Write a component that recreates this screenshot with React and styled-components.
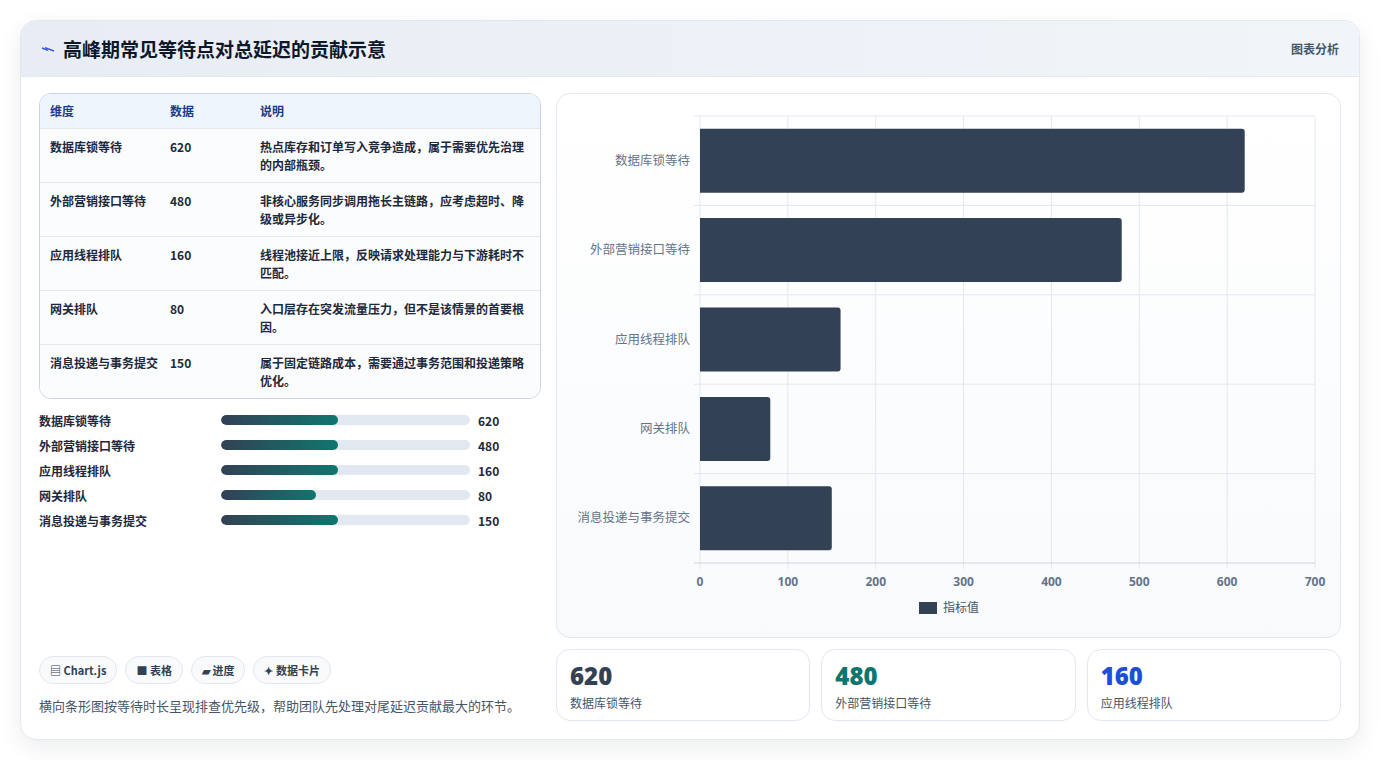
import styled, { createGlobalStyle } from 'styled-components';

const Global = createGlobalStyle`
  body { margin: 0; background: #fff; font-family: "Noto Sans CJK SC", "Noto Sans", sans-serif; color: #1e293b; }
`;

const Page = styled.div`
  padding: 20px 21px 20px 20px;
`;

const Card = styled.div`
  height: 720px;
  box-sizing: border-box;
  border: 1px solid #e2e8f0;
  border-radius: 16px;
  box-shadow: 0 8px 24px rgba(15, 23, 42, 0.08);
  overflow: hidden;
  display: flex;
  flex-direction: column;
  background: #fff;
`;

const Header = styled.div`
  height: 55px;
  flex: none;
  display: flex;
  align-items: center;
  justify-content: space-between;
  padding: 0 20px;
  background: linear-gradient(90deg, #e8edf5, #f1f5f9);
  border-bottom: 1px solid #e2e8f0;
`;

const Title = styled.h1`
  margin: 0;
  font-size: 19px;
  font-weight: 700;
  color: #0f172a;
  display: flex;
  align-items: center;
  gap: 8px;
`;

const Tag = styled.span`
  font-size: 12px;
  font-weight: 600;
  color: #475569;
`;

const Body = styled.div`
  flex: 1;
  display: grid;
  grid-template-columns: 502px 785px;
  gap: 15px;
  padding: 16px 18px 18px 18px;
`;

const Left = styled.div`
  display: flex;
  flex-direction: column;
`;

const Table = styled.div`
  border: 1px solid #cbd5e1;
  border-radius: 12px;
  overflow: hidden;
  font-size: 12px;
  font-weight: 600;
`;

const Row = styled.div`
  display: grid;
  grid-template-columns: 120px 90px 1fr;
  padding: ${p => (p.$head ? '8px 10px' : '9px 16px 8px 10px')};
  min-height: ${p => (p.$head ? '16px' : '36px')};
  line-height: 18px;
  background: ${p => (p.$head ? '#eef5fd' : '#fbfcfe')};
  color: ${p => (p.$head ? '#1e3a8a' : '#1e293b')};
  border-top: ${p => (p.$head ? 'none' : '1px solid #e2e8f0')};
`;

const Bars = styled.div`
  display: flex;
  flex-direction: column;
  gap: 7px;
  margin-top: 12px;
`;

const BarRow = styled.div`
  display: grid;
  grid-template-columns: 182px 249px 1fr;
  align-items: center;
  gap: 0;
  font-size: 12px;
  font-weight: 600;
  height: 18px;
`;

const Track = styled.div`
  height: 10px;
  border-radius: 5px;
  background: #e2e8f0;
  overflow: hidden;
`;

const Fill = styled.div`
  height: 100%;
  border-radius: 5px;
  background: linear-gradient(90deg, #334155, #0f766e);
`;

const Value = styled.span`
  padding-left: 8px;
  font-weight: 700;
`;

const Chips = styled.div`
  margin-top: auto;
  display: flex;
  gap: 8px;
`;

const Chip = styled.span`
  height: 26px;
  padding: 0 10px;
  display: flex;
  align-items: center;
  gap: 3px;
  border: 1px solid #e2e8f0;
  border-radius: 14px;
  background: #f8fafc;
  font-size: 11px;
  font-weight: 600;
  color: #334155;
`;

const Caption = styled.p`
  margin: 12px 0 6px;
  font-size: 13px;
  color: #475569;
`;

const Right = styled.div`
  display: flex;
  flex-direction: column;
  gap: 11px;
`;

const ChartPanel = styled.div`
  height: 543px;
  border: 1px solid #e2e8f0;
  border-radius: 14px;
  background: linear-gradient(180deg, #ffffff, #f8fafc);
  overflow: hidden;
`;

const Stats = styled.div`
  display: grid;
  grid-template-columns: repeat(3, 1fr);
  gap: 11px;
`;

const Stat = styled.div`
  height: 72px;
  box-sizing: border-box;
  border: 1px solid #e2e8f0;
  border-radius: 14px;
  padding: 10px 13px;
`;

const StatNum = styled.div`
  font-family: "Open Sans", sans-serif;
  font-size: 24px;
  font-weight: 800;
  line-height: 32px;
  color: ${p => p.$color};
`;

const StatLabel = styled.div`
  font-size: 12px;
  color: #475569;
  margin-top: 2px;
`;

const rows = [
  ['数据库锁等待', 620, '热点库存和订单写入竞争造成，属于需要优先治理的内部瓶颈。', 47],
  ['外部营销接口等待', 480, '非核心服务同步调用拖长主链路，应考虑超时、降级或异步化。', 47],
  ['应用线程排队', 160, '线程池接近上限，反映请求处理能力与下游耗时不匹配。', 47],
  ['网关排队', 80, '入口层存在突发流量压力，但不是该情景的首要根因。', 38],
  ['消息投递与事务提交', 150, '属于固定链路成本，需要通过事务范围和投递策略优化。', 47],
];

function Chart() {
  const x0 = 143, x1 = 758, y0 = 22, y1 = 469;
  const sx = v => x0 + (v / 700) * (x1 - x0);
  const band = (y1 - y0) / 5;
  return (
    <svg width="785" height="543" viewBox="0 0 785 543">
      {[0, 1, 2, 3, 4, 5, 6, 7].map(i => (
        <line key={i} x1={sx(i * 100)} x2={sx(i * 100)} y1={y0} y2={y1 + 6} stroke="#e2e8f0" />
      ))}
      {[0, 1, 2, 3, 4, 5].map(i => (
        <line key={i} x1={x0 - 6} x2={x1} y1={y0 + i * band} y2={y0 + i * band} stroke={i === 5 ? '#cbd5e1' : '#e2e8f0'} />
      ))}
      {rows.map(([name, v], i) => {
        const cy = y0 + band * i + band / 2;
        return (
          <g key={name}>
            <path d={`M${x0} ${cy - 32} H${sx(v) - 3} Q${sx(v)} ${cy - 32} ${sx(v)} ${cy - 29} V${cy + 29} Q${sx(v)} ${cy + 32} ${sx(v) - 3} ${cy + 32} H${x0} Z`} fill="#334155" />
            <text x={x0 - 10} y={cy + 4} textAnchor="end" fontSize="12.5" fill="#64748b" fontFamily="Noto Sans CJK SC, sans-serif">{name}</text>
          </g>
        );
      })}
      {[0, 1, 2, 3, 4, 5, 6, 7].map(i => (
        <text key={i} x={sx(i * 100)} y={492} textAnchor="middle" fontSize="12" fontWeight="700" fill="#64748b" fontFamily="Open Sans, sans-serif">{i * 100}</text>
      ))}
      <rect x={362} y={508} width={18} height={12} fill="#334155" />
      <text x={386} y={518} fontSize="12" fill="#475569" fontFamily="Noto Sans CJK SC, sans-serif">指标值</text>
    </svg>
  );
}

export default function App() {
  return (
    <Page>
      <Global />
      <Card>
        <Header>
          <Title>
            <svg width="14" height="14" viewBox="0 0 14 14"><path d="M1 6 L6 8 L5 6 L13 9" stroke="#3b5bdb" strokeWidth="1.4" fill="none" /></svg>
            高峰期常见等待点对总延迟的贡献示意
          </Title>
          <Tag>图表分析</Tag>
        </Header>
        <Body>
          <Left>
            <Table>
              <Row $head><span>维度</span><span>数据</span><span>说明</span></Row>
              {rows.map(([n, v, d]) => (
                <Row key={n}><span>{n}</span><span>{v}</span><span>{d}</span></Row>
              ))}
            </Table>
            <Bars>
              {rows.map(([n, v, , w]) => (
                <BarRow key={n}>
                  <span>{n}</span>
                  <Track><Fill style={{ width: `${w}%` }} /></Track>
                  <Value>{v}</Value>
                </BarRow>
              ))}
            </Bars>
            <Chips>
              <Chip>▤ Chart.js</Chip>
              <Chip>■ 表格</Chip>
              <Chip>▰ 进度</Chip>
              <Chip>✦ 数据卡片</Chip>
            </Chips>
            <Caption>横向条形图按等待时长呈现排查优先级，帮助团队先处理对尾延迟贡献最大的环节。</Caption>
          </Left>
          <Right>
            <ChartPanel><Chart /></ChartPanel>
            <Stats>
              <Stat><StatNum $color="#334155">620</StatNum><StatLabel>数据库锁等待</StatLabel></Stat>
              <Stat><StatNum $color="#0f766e">480</StatNum><StatLabel>外部营销接口等待</StatLabel></Stat>
              <Stat><StatNum $color="#1d4ed8">160</StatNum><StatLabel>应用线程排队</StatLabel></Stat>
            </Stats>
          </Right>
        </Body>
      </Card>
    </Page>
  );
}
